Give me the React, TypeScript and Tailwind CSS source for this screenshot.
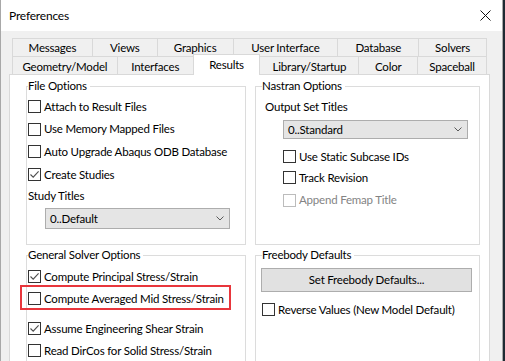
import React from "react";

function Box({ checked = false, disabled = false }: { checked?: boolean; disabled?: boolean }) {
  return (
    <span
      className={`flex h-[13px] w-[13px] shrink-0 items-center justify-center border bg-white ${
        disabled ? "border-[#bcbcbc]" : "border-[#333333]"
      }`}
    >
      {checked && (
        <svg width="11" height="11" viewBox="0 0 11 11">
          <path d="M1.5 5.5 L4.2 8.2 L9.6 2.4" stroke="#4d4d4d" strokeWidth="1.1" fill="none" />
        </svg>
      )}
    </span>
  );
}

function Check({
  label,
  checked,
  disabled,
  className = "h-[23px]",
}: {
  label: string;
  checked?: boolean;
  disabled?: boolean;
  className?: string;
}) {
  return (
    <div className={`flex items-center ${className}`}>
      <Box checked={checked} disabled={disabled} />
      <span className={`ml-[3px] whitespace-nowrap ${disabled ? "text-[#838383]" : "text-black"}`}>{label}</span>
    </div>
  );
}

function Select({ value, className }: { value: string; className: string }) {
  return (
    <div className={`flex items-center justify-between border border-[#adadad] bg-[#e5e5e5] pl-[4px] pr-[5px] ${className}`}>
      <span>{value}</span>
      <svg width="8" height="5" viewBox="0 0 8 5">
        <path d="M0.5 0.5 L4 4 L7.5 0.5" stroke="#5a5a5a" strokeWidth="1" fill="none" />
      </svg>
    </div>
  );
}

function Group({
  title,
  legendClass = "",
  className,
  children,
}: {
  title: string;
  legendClass?: string;
  className: string;
  children: React.ReactNode;
}) {
  return (
    <fieldset className={`relative border border-[#dcdcdc] ${className}`}>
      <legend className={`pr-[3px] leading-[16px] ${legendClass}`}>{title}</legend>
      {children}
    </fieldset>
  );
}

const row1 = [
  ["Messages", "w-[81px] border-l"],
  ["Views", "w-[65px]"],
  ["Graphics", "w-[76px]"],
  ["User Interface", "w-[105px]"],
  ["Database", "w-[81px]"],
  ["Solvers", "w-[68px]"],
];

export default function App() {
  return (
    <div className="flex h-[361px] w-[505px] overflow-hidden bg-[#1f2a33] font-['Lato',sans-serif] text-[11.5px] tracking-[-0.2px] text-black">
      <div className="flex h-full w-[503px] flex-col border-l border-r border-[#a8a8a8] bg-[#f0f0f0]">
        {/* title bar */}
        <div className="flex h-[31px] shrink-0 items-center justify-between bg-white pl-[8px] pr-[9px]">
          <span className="text-[12px]">Preferences</span>
          <svg width="11" height="11" viewBox="0 0 11 11" className="mr-[2px]">
            <path d="M0.5 0.5 L10.5 10.5 M10.5 0.5 L0.5 10.5" stroke="#111" strokeWidth="1" />
          </svg>
        </div>

        <div className="ml-[8px] mt-[7px] w-[481px]">
          {/* tabs */}
          <div className="px-[3px]">
            <div className="flex h-[18px]">
              {row1.map(([t, w]) => (
                <div
                  key={t}
                  className={`flex items-center justify-center border-t border-r border-[#d9d9d9] bg-[#f0f0f0] pt-px ${w}`}
                >
                  {t}
                </div>
              ))}
            </div>
            <div className="flex h-[18px] items-end">
              <div className="flex h-[18px] w-[106px] items-center justify-center border-l border-t border-r border-[#d9d9d9] pt-[2px]">
                Geometry/Model
              </div>
              <div className="flex h-[18px] w-[75px] items-center justify-center border-t border-[#d9d9d9] pt-[2px]">
                Interfaces
              </div>
              <div className="relative z-10 -mb-px flex h-[21px] w-[68px] items-center justify-center border-l border-t border-r border-[#d9d9d9] bg-white pb-px">
                Results
              </div>
              <div className="flex h-[18px] w-[99px] items-center justify-center border-t border-r border-[#d9d9d9] pt-[2px]">
                Library/Startup
              </div>
              <div className="flex h-[18px] w-[59px] items-center justify-center border-t border-r border-[#d9d9d9] pt-[2px]">
                Color
              </div>
              <div className="flex h-[18px] w-[69px] items-center justify-center border-t border-r border-[#d9d9d9] pt-[2px]">
                Spaceball
              </div>
            </div>
          </div>

          {/* panel */}
          <div className="h-[300px] border border-[#d9d9d9] bg-white pl-[16px] pr-[9px] pt-[3px]">
            <div className="grid grid-cols-[220px_225px] gap-x-[9px] gap-y-[2px]">
              <Group title="File Options" legendClass="ml-px" className="h-[167px]">
                <div className="mt-px pl-px">
                  <Check label="Attach to Result Files" />
                  <Check label="Use Memory Mapped Files" className="h-[22px]" />
                  <Check label="Auto Upgrade Abaqus ODB Database" />
                  <Check label="Create Studies" checked />
                  <div className="flex h-[20px] items-center">Study Titles</div>
                  <Select value="0..Default" className="ml-[17px] mt-[2px] h-[21px] w-[185px]" />
                </div>
              </Group>

              <Group title="Nastran Options" legendClass="ml-[6px]" className="h-[167px]">
                <div className="mt-px">
                  <div className="ml-[9px] flex h-[23px] items-center">Output Set Titles</div>
                  <Select value="0..Standard" className="ml-[27px] mt-[2px] h-[19px] w-[185px]" />
                  <div className="ml-[27px] mt-[7px]">
                    <Check label="Use Static Subcase IDs" className="h-[21px]" />
                    <Check label="Track Revision" className="h-[21px]" />
                    <Check label="Append Femap Title" disabled className="h-[24px]" />
                  </div>
                </div>
              </Group>

              <Group title="General Solver Options" legendClass="ml-px" className="h-[130px]">
                <div className="mt-[2px] pl-px">
                  <Check label="Compute Principal Stress/Strain" checked />
                  <div className="relative">
                    <Check label="Compute Averaged Mid Stress/Strain" className="h-[21px]" />
                    <div className="absolute -left-[8px] -top-[3px] h-[25px] w-[211px] border-2 border-[#e8363c]" />
                  </div>
                  <Check label="Assume Engineering Shear Strain" checked className="mt-[8px] h-[23px]" />
                  <Check label="Read DirCos for Solid Stress/Strain" className="h-[21px]" />
                </div>
              </Group>

              <Group title="Freebody Defaults" legendClass="ml-[6px]" className="h-[130px]">
                <div className="ml-[5px] mt-[5px] flex h-[24px] w-[211px] items-center justify-center border border-[#adadad] bg-[#e1e1e1]">
                  Set Freebody Defaults...
                </div>
                <div className="ml-[6px] mt-[6px]">
                  <Check label="Reverse Values (New Model Default)" />
                </div>
              </Group>
            </div>
          </div>
        </div>
      </div>
    </div>
  );
}
